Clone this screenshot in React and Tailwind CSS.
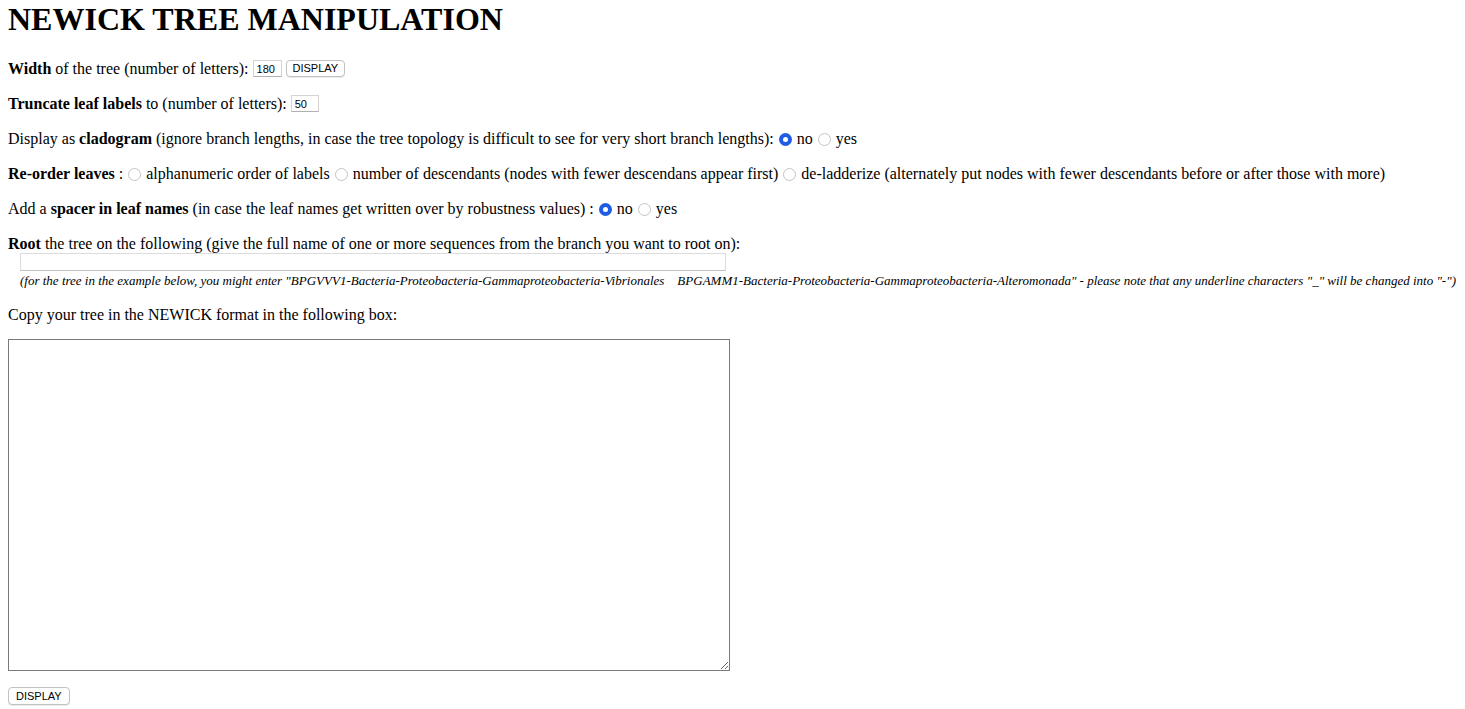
export default function App() {
  const radio = (on) =>
    on ? (
      <span className="inline-block w-[13px] h-[13px] rounded-full bg-[#1f5ce5] align-[-2px] mx-[1px] relative">
        <span className="absolute left-[4px] top-[4px] w-[5px] h-[5px] rounded-full bg-white" />
      </span>
    ) : (
      <span className="inline-block w-[13px] h-[13px] rounded-full border border-[#c4c4c4] bg-white align-[-2px] mx-[1px]" />
    );

  const small = 'font-["Liberation_Sans",Arial,sans-serif] text-[11px] text-black';

  return (
    <div className='min-h-screen bg-white px-2 text-[16px] text-black font-["Liberation_Serif","Times_New_Roman",serif]'>
      <h1 className="text-[32px] font-bold leading-[37px] pt-[1px] mb-[21px]">NEWICK TREE MANIPULATION</h1>

      <div className="flex items-center h-[19px] mb-4 whitespace-pre">
        <span>
          <b>Width</b> of the tree (number of letters):{' '}
        </span>
        <input
          defaultValue="180"
          className={`${small} w-[29px] h-[17px] px-[3px] border border-[#d4d4d4] border-b-[#b0b0b0] outline-none`}
        />
        <button className={`${small} text-[10px] ml-1 h-[17px] px-[6px] border border-[#c2c2c2] rounded-[4px] bg-white shadow-[0_1px_0_rgba(0,0,0,0.08)] leading-[15px]`}>
          DISPLAY
        </button>
      </div>

      <div className="flex items-center h-[19px] mb-4 whitespace-pre">
        <span>
          <b>Truncate leaf labels</b> to (number of letters):{' '}
        </span>
        <input
          defaultValue="50"
          className={`${small} w-[28px] h-[17px] px-[3px] border border-[#d4d4d4] border-b-[#b0b0b0] outline-none`}
        />
      </div>

      <p className="leading-[19px] mb-4">
        Display as <b>cladogram</b> (ignore branch lengths, in case the tree topology is difficult to see for very short
        branch lengths): {radio(true)} no {radio(false)} yes
      </p>

      <p className="leading-[19px] mb-4">
        <b>Re-order leaves</b> : {radio(false)} alphanumeric order of labels {radio(false)} number of descendants (nodes with
        fewer descendans appear first) {radio(false)} de-ladderize (alternately put nodes with fewer descendants before or
        after those with more)
      </p>

      <p className="leading-[19px] mb-4">
        Add a <b>spacer in leaf names</b> (in case the leaf names get written over by robustness values) : {radio(true)} no{' '}
        {radio(false)} yes
      </p>

      <div className="leading-[19px]">
        <b>Root</b> the tree on the following (give the full name of one or more sequences from the branch you want to root
        on):
      </div>
      <div className="pl-3">
        <input className="block w-[706px] h-[18px] border border-[#dcdcdc] border-b-[#c0c0c0] outline-none" />
      </div>
      <div className="pl-3 pt-[2px] text-[13px] italic leading-[16px] whitespace-pre">
        (for the tree in the example below, you might enter "BPGVVV1-Bacteria-Proteobacteria-Gammaproteobacteria-Vibrionales
        {'    '}BPGAMM1-Bacteria-Proteobacteria-Gammaproteobacteria-Alteromonada" - please note that any underline characters "_"
        will be changed into "-")
      </div>

      <p className="leading-[19px] mt-4">Copy your tree in the NEWICK format in the following box:</p>

      <textarea className="block mt-[15px] w-[722px] h-[332px] border border-[#7a7a7a] outline-none resize" />

      <button className={`${small} mt-4 h-[18px] px-[7px] border border-[#c2c2c2] rounded-[4px] bg-white shadow-[0_1px_0_rgba(0,0,0,0.08)] leading-[16px]`}>
        DISPLAY
      </button>
    </div>
  );
}
